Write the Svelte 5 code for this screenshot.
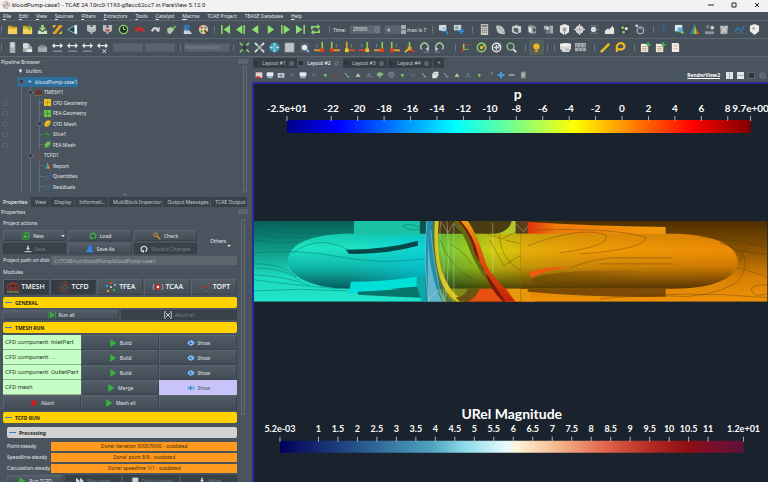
<script lang="ts">
  // Inner SVG of every icon, drawn on a 12x12 grid
  const glyphs: Record<string, string> = {
    open: '<path d="M1 2h4l1 1h5v8H1z" fill="#d9a520"/><path d="M1 5h10v6H1z" fill="#f5d35b"/>',
    openGreen: '<path d="M1 2h4l1 1h5v8H1z" fill="#d9a520"/><path d="M1 5h10v6H1z" fill="#f5d35b"/><path d="M8 1v4M6 4l2 3 2-3z" fill="#6cc24a" stroke="#6cc24a"/>',
    save: '<path d="M6 1v4" stroke="#9bd67c" stroke-width="3"/><path d="M2 4h8L6 8z" fill="#9bd67c"/><path d="M1 7h2l3 2 3-2h2v4H1z" fill="#c8e6c0"/>',
    extract: '<path d="M1 1h4L1 5zM11 11H7l4-4zM1 11V8l3 3zM11 1v3L8 1z" fill="#e8b423"/><path d="M3 10l6-8" stroke="#f0a818" stroke-width="3"/>',
    cone: '<path d="M1 6l9-5v10z" fill="#1d3f49" stroke="#7cc8d8"/><path d="M8 2l3-1v10l-3-1z" fill="#eee"/>',
    plug: '<path d="M1 1h4v3h2V1h4v5q0 3-4 3v2H5V9Q1 9 1 6z" fill="#b4babe"/><path d="M3 4h6" stroke="#ddd"/>',
    plugRed: '<path d="M1 1h4v3h2V1h4v5q0 3-4 3v2H5V9Q1 9 1 6z" fill="#b4babe"/><path d="M4 7h4" stroke="#c33" stroke-width="2"/>',
    reload: '<circle cx="6" cy="6" r="4.500" fill="#26332b" stroke="#8ccb6c" stroke-width="1.500"/><path d="M6 3v3h2" fill="none" stroke="#b7e69a"/>',
    undo: '<path d="M3 6q4-4 8 3" fill="none" stroke="#d8281e" stroke-width="2.500"/><path d="M1 3l1 6 4-2z" fill="#d8281e"/>',
    redo: '<path d="M9 6Q5 2 2 8" fill="none" stroke="#d0d3d6" stroke-width="2.500"/><path d="M11 3l-1 6-4-2z" fill="#d0d3d6"/>',
    find: '<path d="M1 5l5-2 3 3-4 5-3-1z" fill="#a9c9a4"/><path d="M6 6l4-5 1 3z" fill="#6cc24a"/>',
    layers: '<path d="M2 1h6v6H2z" fill="#2f78b8"/><path d="M2 7h6l3 4H2z" fill="#cfd5da"/><path d="M3 6l5 4" stroke="#8ec4ea"/>',
    palette: '<circle cx="6" cy="6" r="5" fill="#e9c89c"/><circle cx="4" cy="4" r="1.2" fill="#d33"/><circle cx="8" cy="4" r="1.2" fill="#38c"/><circle cx="4" cy="8" r="1.2" fill="#3a3"/><path d="M7 7l4 4" stroke="#444" stroke-width="2"/>',
    first: '<path d="M2 1v10" stroke="#8ee06c" stroke-width="1.6"/><path d="M11 1v10L4 6z" fill="#8ee06c"/>',
    prev: '<path d="M8 1v10L1 6z" fill="#8ee06c"/><path d="M10 1v10" stroke="#8ee06c" stroke-width="1.6"/>',
    back: '<path d="M9 1v10L2 6z" fill="#8ee06c"/>',
    play: '<path d="M3 1v10l7-5z" fill="#8ee06c"/>',
    next: '<path d="M2 1v10" stroke="#8ee06c" stroke-width="1.6"/><path d="M4 1v10l7-5z" fill="#8ee06c"/>',
    last: '<path d="M1 1v10l7-5z" fill="#8ee06c"/><path d="M10 1v10" stroke="#8ee06c" stroke-width="1.6"/>',
    loop: '<path d="M2 6V3h7M10 6v3H3" fill="none" stroke="#8ee06c" stroke-width="1.8"/><path d="M8 0l3 3-3 3zM4 6L1 9l3 3z" fill="#8ee06c"/>',
    zoomTime: '<path d="M1 1h8v6H1z" fill="#cdd6dd"/><circle cx="6" cy="5" r="2.500" fill="#9cc4df" stroke="#e8eef2"/><path d="M8 7l3 4" stroke="#2f8fd0" stroke-width="2"/>',
    zoomPlus: '<path d="M1 1h8v6H1z" fill="#cdd6dd"/><circle cx="4" cy="4" r="2" fill="#8aa"/><path d="M9 5v6M6 8h6" stroke="#2f8fd0" stroke-width="2"/>',
    calc: '<path d="M2 0h8v12H2z" fill="#c9c8c0"/><path d="M3 1h6v2H3z" fill="#777"/><path d="M3 5h6M3 7h6M3 9h6" stroke="#666" stroke-dasharray="1.4 .8"/>',
    leaf: '<path d="M1 2q6-2 9 4l1 5q-7 1-9-4z" fill="#bfc3c4"/><path d="M3 3l7 7" stroke="#888" stroke-width=".6"/>',
    cube: '<path d="M1 3l5-2 5 2v6l-5 2-5-2z" fill="#c9cccd"/><path d="M3 4l5 1v5l-5-2z" fill="#555c63"/><path d="M8 5l3-2" stroke="#eee"/>',
    clip: '<path d="M1 2l4-1 5 2v7l-4 1-5-2z" fill="#8f959a"/><path d="M2 3l3 1v6L2 8z" fill="#e3e3e3"/><path d="M7 5h2v3H7z" fill="#333b43"/>',
    thresh: '<path d="M1 2h5v4H1zM7 2h4v8H7z" fill="#a7adb1"/><path d="M3 5h5v6H3z" fill="#6d747b"/><circle cx="5" cy="5" r="1.4" fill="#eee"/>',
    box: '<path d="M1 2l5-2 5 2v7l-5 3-5-3z" fill="#e8e8e6"/><path d="M4 4h4v4H4z" fill="#9ea3a5"/><path d="M6 8v4" stroke="#888"/>',
    sphere: '<circle cx="6" cy="6" r="4.500" fill="#d5d7d7"/><path d="M6 0v12M0 6h12" stroke="#f0f0f0"/><path d="M6 2v8M2 6h8" stroke="#888" stroke-width=".6"/>',
    stream: '<circle cx="5" cy="6" r="3" fill="#d9d9d9"/><path d="M1 2h9M1 10h9M7 6h4" stroke="#737a80"/>',
    warp: '<path d="M1 8q3-5 5-2l3-4 2 3v6H1z" fill="#e3e4e2"/>',
    group: '<path d="M1 1h10v10H1z" fill="#3b464c"/><circle cx="4" cy="4" r="1.6" fill="#7fc95f"/><circle cx="8" cy="5" r="1.8" fill="#dfe4dd"/><circle cx="5" cy="9" r="1.6" fill="#7fc95f"/>',
    level: '<circle cx="7" cy="7" r="3.500" fill="none" stroke="#aab0b5" stroke-width="1.4"/><circle cx="3" cy="2" r="1.500" fill="#dde2e5"/><path d="M3 2l5 4" stroke="#aac"/>',
    half: '<path d="M4 1h2v9H4z" fill="#2d62a0"/>',
    sheet: '<path d="M1 1h8v7H1z" fill="#d8e8f0"/><path d="M4 4h5v5H4z" fill="#63a6d8"/><path d="M9 7v4M7 9h4" stroke="#6cc24a" stroke-width="1.4"/>',
    prism: '<path d="M6 0l3 11H6z" fill="#e7d622"/><path d="M6 0L1 11h3z" fill="#3a6fd8"/><path d="M6 0L4 11h3z" fill="#48b84a"/><path d="M7 4l4 7H8z" fill="#e26a26"/>',
    people: '<circle cx="4" cy="3" r="2" fill="#777f86"/><circle cx="9" cy="4" r="2" fill="#c9ccd0"/><path d="M1 8h10v3H1z" fill="#8f969b"/>',
    graph: '<path d="M1 2h9l-1 9H2z" fill="#a8acad"/><path d="M2 10l7-8M3 3l5 6" stroke="#e6e6e6"/>',
    wave: '<path d="M1 9q3-7 5-3t5-4" fill="none" stroke="#2f78b8" stroke-width="1.500"/><path d="M1 10h10" stroke="#54707f"/>',
    shell: '<path d="M1 2l5-2 5 2v6l-5 4-5-4z" fill="#ecebe8"/><circle cx="5" cy="5" r="1.6" fill="#b5b5b2"/>',
    bar: '<path d="M3 0h6v12H3z" fill="#a9aeb1"/><path d="M4 1h4v5H4z" fill="#d0d3d5"/>',
    edit: '<path d="M1 1h6l4 5v5H1z" fill="#a5aaad"/><circle cx="4" cy="4" r="3" fill="#d8dadb"/><path d="M5 8h6v3H5z" fill="#e9e9e9"/>',
    bake: '<path d="M1 5h10v6H1z" fill="#a2a8ab"/><path d="M3 3h6v3H3z" fill="#7d858b"/>',
    range: '<path d="M1 4h10" stroke="#eee" stroke-width="1.3"/><path d="M0 4l3-3v6zM12 4L9 1v6z" fill="#eee"/><path d="M1 10h10" stroke="#8d949a" stroke-width="1.4"/>',
    rangeX: '<path d="M1 4h10" stroke="#eee" stroke-width="1.3"/><path d="M0 4l3-3v6zM12 4L9 1v6z" fill="#eee"/><path d="M6 8l4 4M10 8l-4 4" stroke="#eee"/>',
    fitDark: '<path d="M1 1l3 3M11 1L8 4M1 11l3-3M11 11L8 8" stroke="#7fbf6a" stroke-width="1.8"/><path d="M4 4h4v4H4z" fill="#303a35"/>',
    fit: '<path d="M1 1l3 3M11 1L8 4M1 11l3-3M11 11L8 8" stroke="#dfe3e6" stroke-width="2"/><path d="M4 4h4v4H4z" fill="#aab1b6"/>',
    target: '<circle cx="6" cy="6" r="5.500" fill="#3e9bb4"/><path d="M6 1v3M6 8v3M1 6h3M8 6h3" stroke="#b9e3ee" stroke-width="1.500"/><path d="M4 4h4v4H4z" fill="#59b7cd"/>',
    fill: '<path d="M1 1h10v10H1z" fill="#bfc2c4"/><path d="M1 1h10v10H1z" fill="none" stroke="#8f9599" stroke-dasharray="1 1"/>',
    lens: '<path d="M1 1h10v10H1z" fill="#56616b"/><circle cx="6" cy="6" r="3" fill="#dfe9f0"/><path d="M8 8l3 3" stroke="#8fb4d0" stroke-width="2"/>',
    axR: '<path d="M9 0v9" stroke="#8ccf45" stroke-width="1.8"/><path d="M0 9h9" stroke="#e8952b" stroke-width="2"/><path d="M7 7h4v4H7z" fill="#e03a1c"/><path d="M3 2v4" stroke="#7b858d"/>',
    axL: '<path d="M3 0v9" stroke="#8ccf45" stroke-width="1.8"/><path d="M2 9h10" stroke="#e6a321" stroke-width="2"/><path d="M1 7h4v4H1z" fill="#e03a1c"/><path d="M8 2v4" stroke="#7b858d"/>',
    axY: '<path d="M3 0v9" stroke="#e6a321" stroke-width="1.8"/><path d="M2 9h10" stroke="#d9482b" stroke-width="2"/><path d="M1 7h4v4H1z" fill="#e8d12a"/><path d="M8 2v4" stroke="#7b858d"/>',
    axG: '<path d="M9 0v9" stroke="#8ccf45" stroke-width="1.8"/><path d="M0 9h9" stroke="#d9482b" stroke-width="2"/><path d="M7 7h4v4H7z" fill="#e8c52a"/><path d="M3 2v4" stroke="#7b858d"/>',
    iso: '<path d="M6 0v7" stroke="#8ccf45" stroke-width="1.8"/><path d="M6 7l-5 4" stroke="#e6c321" stroke-width="2"/><path d="M6 7l5 4" stroke="#e03a1c" stroke-width="2"/><path d="M4 5h4v4H4z" fill="#e8a32a"/>',
    rotL: '<path d="M9 8A4 4 0 1 0 3 8" fill="none" stroke="#a9cfa6" stroke-width="1.500"/><path d="M7 7h4l-1 3z" fill="#cde"/><path d="M5 11h6" stroke="#7d868d"/>',
    rotR: '<path d="M3 8A4 4 0 1 1 9 8" fill="none" stroke="#a9cfa6" stroke-width="1.500"/><path d="M5 7H1l1 3z" fill="#cde"/><path d="M1 11h6" stroke="#7d868d"/>',
    axes: '<path d="M3 9V2" stroke="#e6c321" stroke-width="1.4"/><path d="M3 8h6" stroke="#7dc63e"/><path d="M3 8l-2 3" stroke="#e03a1c" stroke-width="1.4"/><path d="M6 3h5" stroke="#e05030" stroke-dasharray="1.5 .5"/>',
    spinG: '<circle cx="6" cy="6" r="4.600" fill="none" stroke="#9bd65e" stroke-width="1.500"/><circle cx="6" cy="6" r="1.8" fill="#e0c030"/><path d="M10 1v4H7z" fill="#9bd65e"/>',
    spinW: '<circle cx="6" cy="6" r="4.600" fill="none" stroke="#e6e8ea" stroke-width="1.500"/><path d="M6 3v6M3 6h6" stroke="#cfd6da" stroke-width="1.6"/><path d="M10 1v4H7z" fill="#e6e8ea"/>',
    spinZ: '<circle cx="5" cy="5" r="3.800" fill="none" stroke="#8fc48a" stroke-width="1.500"/><path d="M8 8l3 3" stroke="#dfe4e6" stroke-width="2"/>',
    bulb: '<circle cx="6" cy="5" r="3.400" fill="#f2b71c"/><path d="M4.500 8h3v3h-3z" fill="#c9962a"/>',
    disk: '<path d="M0 2h12v5l-2 4H3L0 7z" fill="#d7d7d5"/><ellipse cx="6" cy="3" rx="6" ry="2" fill="#efefed"/><path d="M6 8h4" stroke="#999"/>',
    hatch: '<path d="M0 1h12v9H0z" fill="#a3a8ab"/><path d="M0 6h12M2 2v4M6 2v4M10 2v4M4 6v4M8 6v4" stroke="#6b7278"/>',
    ruler: '<path d="M0 10l9-9 2 2-9 9z" fill="#edc224"/><path d="M3 8l1 1M5 6l1 1M7 4l1 1" stroke="#8a6a00" stroke-width=".6"/>',
    protractor: '<path d="M2 11V4Q5 0 9 2q3 4-1 6H3" fill="none" stroke="#edb824" stroke-width="2.400"/>',
    sheetAdd: '<path d="M1 2h8v9H1z" fill="#f0eee8"/><path d="M2 5h6M2 7h6M2 9h6" stroke="#c98a5a" stroke-width=".8"/><path d="M9 0v5M7 3h5" stroke="#3fb34f" stroke-width="1.500"/>',
    sheetPlain: '<path d="M2 1h7l1 2v8H2z" fill="#efece6"/><path d="M4 4h4M4 7h4" stroke="#c9a58a" stroke-width=".8"/>',
    cam: '<path d="M1 3h10v7H1z" fill="#c7cfd6"/><circle cx="6" cy="6.500" r="2.400" fill="#6d90aa"/>',
    camRed: '<path d="M1 2h10v8H1z" fill="#e3d5d5"/><path d="M1 8h7v3H1z" fill="#c33"/>',
    camUp: '<path d="M1 2h10v6H1z" fill="#e8edf1"/><path d="M3 7h6l1 4H2z" fill="#9fb2c0"/>',
    faint: '<path d="M3 4h6v4H3z" fill="#5b656e"/>',
    dotG: '<path d="M4 6h5M6.500 4v5" stroke="#7fd05a" stroke-width="1.8"/>',
    minus: '<path d="M2 6h8" stroke="#a8423a" stroke-width="1.6"/>',
    pick: '<path d="M3 3l5 6" stroke="#c9b09a" stroke-width="1.3"/><path d="M6 9h4" stroke="#9ab"/>',
    tri: '<path d="M6 3l4 6H2z" fill="#a7b6a4"/><path d="M6 5v3" stroke="#e8e04a"/>',
    triOut: '<path d="M6 3l4 7M6 3L3 10M4 8h4" fill="none" stroke="#7f8a92"/>',
    blob: '<path d="M1 7q0-5 5-5t5 4l-4 1v4H5V8z" fill="#86b878"/>',
    blobOut: '<path d="M2 7q-1-5 4-5t5 4l-3 4H6z" fill="#616c75" stroke="#8b959c"/>',
    cubeW: '<path d="M2 4l3-3h6v6l-3 4H2z" fill="#e6e6e3"/><path d="M2 4h6v7" fill="none" stroke="#a0a4a6"/>',
    slash: '<path d="M2 10l7-7" stroke="#7c6a55"/><circle cx="9" cy="3" r="1.500" fill="#5d9a66"/>',
    plusB: '<path d="M6 1v10M1 6h10" stroke="#3f9fd6" stroke-width="3"/>',
    dash: '<path d="M1 6h9" stroke="#c7ccd0" stroke-width="1.6"/>',
    clipb: '<path d="M3 1h7v10H3z" fill="#8f9a94"/><path d="M4 4h5M4 7h5" stroke="#c4cfc4"/>',
    server: '<path d="M4 2h4v5H4z" fill="#dde2e6"/><path d="M6 7v3" stroke="#aab"/>',
    small: '<path d="M4 4h4v4H4z" fill="#79b7d6"/><path d="M7 6h3" stroke="#ddd"/>',
    mesh: '<path d="M0 11V6q1-4 6-4t6 4v5z" fill="#3a3230" stroke="#c8352c"/><path d="M1 7h10M1 9h10M4 3v8M8 3v8" stroke="#b23b31" stroke-width=".7"/><path d="M0 11h12" stroke="#3fae5a"/>',
    cfd: '<circle cx="6" cy="6" r="5" fill="none" stroke="#b5382e" stroke-dasharray="3 1.5"/><circle cx="6" cy="6" r="2.500" fill="none" stroke="#3f8f57" stroke-dasharray="2 1"/><path d="M3 9l6-7" stroke="#a33d34"/>',
    fea: '<circle cx="6" cy="2" r="1.300" fill="#d9482b"/><circle cx="2" cy="5" r="1.200" fill="#38a4d8"/><circle cx="3" cy="10" r="1.300" fill="#e69a21"/><circle cx="9" cy="9" r="1.300" fill="#3fae5a"/><circle cx="10" cy="4" r="1.200" fill="#8ac"/><circle cx="6" cy="6" r="1" fill="#ddd"/>',
    caa: '<circle cx="6" cy="6" r="2" fill="#fff" stroke="#d8281e" stroke-width="1.500"/><path d="M2 3q-2 3 0 6M10 3q2 3 0 6" fill="none" stroke="#9aa3aa"/>',
    opt: '<circle cx="7" cy="6" r="4" fill="none" stroke="#45785a" stroke-dasharray="2 1"/><path d="M1 8l4-3 3 2 3-5" fill="none" stroke="#b5382e"/>',
    geoY: '<path d="M0 0h12v12H0z" fill="#f2c21e"/><path d="M6 1v10M1 6h10" stroke="#a97a10"/>',
    geoG: '<path d="M0 0h12v12H0z" fill="#6cc24a"/><path d="M6 1v10M1 6h10" stroke="#2f7a24"/>',
    cubeY: '<path d="M1 5l4-4h6v5l-4 5H1z" fill="#f2c21e"/><path d="M3 7h4l3-4" stroke="#a97a10" fill="none"/>',
    cubeG: '<path d="M1 6l4-5h6v5l-4 5H1z" fill="#62b04a"/><path d="M3 8l6-5" stroke="#b9e6a6" fill="none"/>',
    slice: '<path d="M1 1h3v10H1z" fill="#35752f"/><path d="M5 2l5 1v8H5z" fill="#3c6b42"/><path d="M4 3l4 4" stroke="#8fd67a"/>',
    newDoc: '<path d="M4 1h7v8H4z" fill="none" stroke="#35b43a" stroke-width="1.300"/><path d="M1 3h8v8H1z" fill="#2c6f34" stroke="#35b43a"/><path d="M5 5v4M3 7h4" stroke="#8ff090"/>',
    load: '<path d="M4 10A4.300 4.300 0 1 1 8 10" fill="none" stroke="#35b43a" stroke-width="2"/><path d="M1 8h5v4z" fill="#35b43a"/>',
    discard: '<path d="M4 10A4.300 4.300 0 1 1 8 10" fill="none" stroke="#dde1e4" stroke-width="1.8"/><path d="M1 8h5v4z" fill="#dde1e4"/>',
    check: '<circle cx="4" cy="4" r="2.800" fill="none" stroke="#d9902a" stroke-width="1.500"/><path d="M6 6l5 5" stroke="#d9902a" stroke-width="2"/>',
    down: '<path d="M6 1v5" stroke="#dde1e4" stroke-width="2"/><path d="M3 5h6L6 8z" fill="#dde1e4"/><path d="M1 10h10" stroke="#dde1e4" stroke-width="1.500"/>',
    saveAs: '<path d="M3 1h6v5H3z" fill="#2f7fe0"/><path d="M0 11l3-5h5l4 5z" fill="#3a85e6"/>',
    runAll: '<path d="M1 1v10M11 1v10" stroke="#35b43a"/><path d="M3 1v10l7-5z" fill="#35b43a"/>',
    abortAll: '<path d="M3 1H1v10h2M9 1h2v10H9" fill="none" stroke="#cfd4d8" stroke-width="1.3"/><path d="M3 3l6 6M9 3L3 9" stroke="#cfd4d8" stroke-width="1.500"/>',
    go: '<path d="M2 0v12l9-6z" fill="#35b43a"/>',
    eye: '<path d="M0 6q6-8 12 0-6 8-12 0z" fill="#4f9ff0"/><circle cx="6" cy="5.800" r="3" fill="#1d5fb4" stroke="#eaf3ff"/><circle cx="7" cy="5" r="1" fill="#fff"/>',
    stop: '<path d="M3 2h6l1 1v6l-1 1H3L2 9V3z" fill="#c5232b"/>',
    ff: '<path d="M0 1v10l6-5zM6 1v10l6-5z" fill="#cfd4d8"/>',
    square: '<path d="M2 1h9v10H2z" fill="#cfd4d8"/>',
    split: '<path d="M0 0h12v12H0z" fill="#dfe5ec"/><path d="M6 1v10" stroke="#6f86a8"/>',
    splitH: '<path d="M0 0h12v12H0z" fill="#dfe5ec"/><path d="M1 6h10" stroke="#6f86a8"/>',
    max: '<path d="M1 1h10v10H1z" fill="#2c343c" stroke="#79838c"/>',
    close: '<path d="M1 1h10v10H1z" fill="#66707a"/><path d="M3 3l6 6M9 3l-6 6" stroke="#384049"/>'
  };

  const menus = ['File', 'Edit', 'View', 'Sources', 'Filters', 'Extractors', 'Tools', 'Catalyst', 'Macros', 'TCAE Project', 'TBASE Database', 'Help'];

  const fileTools = ['open', 'openGreen', 'save', 'extract', 'cone'];
  const serverTools = ['plug', 'plugRed', 'reload', 'undo', 'redo', 'find', 'layers', 'palette'];
  const vcrTools = ['first', 'prev', 'back', 'play', 'next', 'last', 'loop'];
  const filterTools = ['calc', 'leaf', 'cube', 'clip', 'thresh', 'box'];
  const filterTools2 = ['sphere', 'stream', 'warp', 'group', 'level'];
  const dataTools = ['half', 'sheet', 'prism', 'people', 'graph', 'wave', 'shell'];

  const colorTools = ['bar', 'edit', 'bake', 'range', 'range', 'range', 'rangeX'];
  const cameraTools = ['fitDark', 'fit', 'target', 'fill', 'lens', 'axR', 'axL', 'axY', 'axG', 'axR', 'axL', 'iso', 'rotL', 'rotR'];
  const centerTools = ['axes', 'spinG', 'spinW', 'spinZ'];

  const viewTools = ['camRed', 'camUp', 'cam', 'faint', 'camUp', 'faint', 'dotG', 'minus', 'pick', 'tri', 'triOut', 'blob', 'blobOut', 'dotG', 'faint', 'pick', 'cubeW', 'pick', 'tri', 'triOut', 'dotG', 'slash', 'plusB', 'dash', 'clipb'];

  const tree = [
    { level: 0, icon: 'server', label: 'builtin:' },
    { level: 1, icon: 'small', label: 'bloodPump-case1', open: true, selected: true },
    { level: 2, icon: 'mesh', label: 'TMESH1', open: true },
    { level: 3, icon: 'geoY', label: 'CFD Geometry', eye: true },
    { level: 3, icon: 'geoG', label: 'FEA Geometry', eye: true },
    { level: 3, icon: 'cubeY', label: 'CFD Mesh', open: true, eye: true },
    { level: 3, icon: 'slice', label: 'Slice1', eye: true },
    { level: 3, icon: 'cubeG', label: 'FEA Mesh', eye: true },
    { level: 2, icon: 'cfd', label: 'TCFD1', open: true },
    { level: 3, icon: 'prism', label: 'Report' },
    { level: 3, icon: 'wave', label: 'Quantities' },
    { level: 3, icon: 'wave', label: 'Residuals' }
  ];

  const panelTabs = ['Properties', 'View', 'Display', 'Informati...', 'MultiBlock Inspector', 'Output Messages', 'TCAE Output'];

  const actions = [
    { icon: 'newDoc', label: 'New', arrow: true },
    { icon: 'load', label: 'Load' },
    { icon: 'check', label: 'Check' },
    { icon: 'down', label: 'Save', off: true },
    { icon: 'saveAs', label: 'Save As' },
    { icon: 'discard', label: 'Discard Changes', off: true }
  ];

  const modules = [
    { icon: 'mesh', label: 'TMESH', on: true },
    { icon: 'cfd', label: 'TCFD', on: true },
    { icon: 'fea', label: 'TFEA' },
    { icon: 'caa', label: 'TCAA' },
    { icon: 'opt', label: 'TOPT' }
  ];

  const parts = [
    { name: 'CFD component: InletPart', action: 'Build' },
    { name: 'CFD component: ...', action: 'Build' },
    { name: 'CFD component: OutletPart', action: 'Build' },
    { name: 'CFD mesh', action: 'Merge', shown: true }
  ];

  const progress = [
    { name: 'Point-steady', text: 'Done! iteration 5000/5000 - outdated' },
    { name: 'Speedline-steady', text: 'Done! point 8/8 - outdated' },
    { name: 'Calculation-steady', text: 'Done! speedline 1/1 - outdated' }
  ];

  const layouts = ['Layout #1', 'Layout #2', 'Layout #3', 'Layout #4'];

  // Legend ticks
  const pTicks = Array.from({ length: 16 }, (_, i) => -22 + i * 2).map((v) => ({ x: 516.5 + 13.23 * (v + 8), label: String(v) }));
  const uTicks = Array.from({ length: 21 }, (_, i) => 1 + i * 0.5).map((v) => ({ x: 318.5 + 39 * (v - 1), label: String(v) }));

  let activeTab = $state('Properties');
  let activeLayout = $state('Layout #2');
  let time = $state('25000');
  let step = $state('4');
  let path = $state('C:/TCAE/run/bloodPump/bloodPump-case1');
</script>

{#snippet icon(name: string)}
  <svg class="icon" viewBox="0 0 12 12" aria-hidden="true">{@html glyphs[name]}</svg>
{/snippet}

{#snippet tools(names: string[], wide = false)}
  <div class="group" class:wide>
    {#each names as name}
      <button class="tool" aria-label={name}>{@render icon(name)}</button>
    {/each}
  </div>
{/snippet}

{#snippet section(title: string)}
  <button class="section"><span class="fold"></span>{title}</button>
{/snippet}

<div class="app">
  <header class="titlebar">
    {@render icon('cfd')}
    <span>bloodPump-case1 - TCAE 24.10rc0-1193-g8ecc62cc7 in ParaView 5.12.0</span>
    <div class="window-buttons">
      <button aria-label="Minimize"><svg viewBox="0 0 8 8"><path d="M1 4h6" /></svg></button>
      <button aria-label="Maximize"><svg viewBox="0 0 8 8"><path d="M2 2h4v4H2z" /></svg></button>
      <button aria-label="Close"><svg viewBox="0 0 8 8"><path d="M2 2l4 4M6 2L2 6" /></svg></button>
    </div>
  </header>

  <nav class="menubar">
    {#each menus as menu}
      <button>{#if menu === 'TCAE Project' || menu === 'TBASE Database'}{menu}{:else}<u>{menu[0]}</u>{menu.slice(1)}{/if}</button>
    {/each}
  </nav>

  <div class="toolbar">
    <i class="sep"></i>
    {@render tools(fileTools)}
    {@render tools(serverTools, true)}
    <i class="sep"></i>
    {@render tools(vcrTools)}
    <i class="sep"></i>
    <label for="time">Time:</label>
    <select id="time" class="time" bind:value={time}><option>25000</option></select>
    <input class="step" type="text" inputmode="numeric" aria-label="Time step" bind:value={step} />
    <span class="spin"></span>
    <span class="max">max is 7</span>
    <i class="sep"></i>
    {@render tools(['zoomTime', 'zoomPlus'])}
    <i class="sep"></i>
    {@render tools(filterTools, true)}
    {@render tools(filterTools2)}
    <i class="sep"></i>
    {@render tools(dataTools)}
  </div>

  <div class="toolbar">
    <i class="sep"></i>
    {@render tools(colorTools)}
    <select class="array" aria-label="Color array"><option></option></select>
    <select class="array" aria-label="Component"><option></option></select>
    <i class="sep"></i>
    <select class="repr" aria-label="Representation"><option>Representation</option></select>
    <i class="sep"></i>
    {@render tools(cameraTools)}
    <i class="sep wide-sep"></i>
    {@render tools(centerTools)}
    <i class="sep"></i>
    <button class="tool pressed" aria-label="Light">{@render icon('bulb')}</button>
    <i class="sep"></i>
    <i class="sep"></i>
    {@render tools(['disk', 'hatch'])}
    <i class="sep"></i>
    {@render tools(['ruler', 'protractor'])}
    <i class="sep"></i>
    {@render tools(['sheetAdd', 'sheetAdd', 'sheetPlain'])}
  </div>

  <main>
    <aside>
      <div class="dock-title">Pipeline Browser {@render icon('close')}{@render icon('close')}</div>
      <div class="tree">
        <div class="rows">
          {#each tree as node}
            <div class="node">
              <span class="vis">{#if node.eye}<i></i>{/if}</span>
              {#each Array(Math.max(node.level - 1, 0)) as _}
                <span class="guide"></span>
              {/each}
              <span class="item" class:root={node.level === 0} class:selected={node.selected}>
                <span class="branch" class:open={node.open}></span>
                {@render icon(node.icon)}
                {node.label}
              </span>
            </div>
          {/each}
        </div>
        <div class="scroll"><i></i></div>
      </div>
      <div class="splitter"></div>

      <div class="tabs" role="tablist">
        {#each panelTabs as tab}
          <button role="tab" aria-selected={activeTab === tab} class:active={activeTab === tab} onclick={() => (activeTab = tab)}>{tab}</button>
        {/each}
      </div>
      <div class="dock-title">Properties {@render icon('close')}{@render icon('close')}</div>

      <div class="props">
        <div class="form">
          <p class="caption">Project actions</p>
          <div class="actions">
            {#each actions as a}
              <button class="btn" disabled={a.off}>{@render icon(a.icon)}<span>{a.label}</span>{#if a.arrow}<b class="arrow"></b>{/if}</button>
            {/each}
            <button class="others">Others<b class="arrow"></b></button>
          </div>
          <div class="path">
            <label for="path">Project path on disk</label>
            <input id="path" type="text" bind:value={path} />
          </div>
          <p class="caption">Modules</p>
          <div class="modules">
            {#each modules as m}
              <button class="btn" class:on={m.on}>{@render icon(m.icon)}{m.label}</button>
            {/each}
          </div>

          {@render section('GENERAL')}
          <div class="pair">
            <button class="btn">{@render icon('runAll')}<span>Run all</span></button>
            <button class="btn" disabled>{@render icon('abortAll')}<span>Abort all</span></button>
          </div>

          {@render section('TMESH RUN')}
          <div class="parts">
            {#each parts as p}
              <span class="part">{p.name}</span>
              <button class="btn">{@render icon('go')}{p.action}</button>
              <button class="btn" class:shown={p.shown}>{@render icon('eye')}Show</button>
            {/each}
            <button class="btn">{@render icon('stop')}Abort</button>
            <button class="btn">{@render icon('go')}Mesh all</button>
            <span class="btn"></span>
          </div>

          {@render section('TCFD RUN')}
          <div class="sub">
            <button class="section grey"><span class="fold"></span>Processing</button>
            {#each progress as row}
              <div class="status"><span>{row.name}</span><output>{row.text}</output></div>
            {/each}
            <div class="run">
              <button class="btn">{@render icon('go')}<span>Run TCFD</span></button>
              <button class="btn" disabled>{@render icon('ff')}<span>Skip point</span></button>
              <button class="btn" disabled>{@render icon('square')}<span>Quit (+ write)</span></button>
              <button class="btn" disabled>{@render icon('down')}<span>Write</span></button>
            </div>
          </div>
        </div>
        <div class="scroll"><i></i></div>
      </div>
    </aside>

    <section class="workspace">
      <div class="layouts" role="tablist">
        {#each layouts as l}
          <button role="tab" aria-selected={activeLayout === l} class:active={activeLayout === l} onclick={() => (activeLayout = l)}><i></i>{l}{@render icon('close')}</button>
        {/each}
        <button class="add">+</button>
      </div>
      <div class="viewbar">
        {#each viewTools as name}
          <button class="tool" aria-label={name}>{@render icon(name)}</button>
        {/each}
        <a href="#view">RenderView2</a>
        {#each ['split', 'splitH', 'max', 'close'] as name}
          <button class="tool frame" aria-label={name}>{@render icon(name)}</button>
        {/each}
      </div>

      <div class="view" id="view">
        <svg viewBox="254 84 514 398" preserveAspectRatio="xMidYMin meet">
          <defs>
            <linearGradient id="jet">
              <stop offset="0" stop-color="#00008c" />
              <stop offset=".11" stop-color="#0000ff" />
              <stop offset=".365" stop-color="#00ffff" />
              <stop offset=".5" stop-color="#80ff80" />
              <stop offset=".62" stop-color="#ffff00" />
              <stop offset=".875" stop-color="#ff0000" />
              <stop offset="1" stop-color="#800000" />
            </linearGradient>
            <linearGradient id="velocity">
              <stop offset="0" stop-color="#00005a" />
              <stop offset=".08" stop-color="#14286e" />
              <stop offset=".16" stop-color="#24508a" />
              <stop offset=".33" stop-color="#50a5c0" />
              <stop offset=".4" stop-color="#8fdcea" />
              <stop offset=".49" stop-color="#e6fbff" />
              <stop offset=".51" stop-color="#fff3d8" />
              <stop offset=".6" stop-color="#f3b68c" />
              <stop offset=".7" stop-color="#e2664c" />
              <stop offset=".8" stop-color="#b32a22" />
              <stop offset=".88" stop-color="#8f0d12" />
              <stop offset=".93" stop-color="#7b0f2c" />
              <stop offset="1" stop-color="#5c1138" />
            </linearGradient>
            <linearGradient id="inlet" x2="0" y2="1">
              <stop offset="0" stop-color="#075f57" />
              <stop offset=".4" stop-color="#10a08c" />
              <stop offset=".7" stop-color="#1ddcc0" />
              <stop offset="1" stop-color="#20e4c8" />
            </linearGradient>
            <linearGradient id="nose" x2="0" y2="1">
              <stop offset="0" stop-color="#14c8ae" />
              <stop offset=".25" stop-color="#1fe4c4" />
              <stop offset=".6" stop-color="#0fb8ac" />
              <stop offset="1" stop-color="#045a5c" />
            </linearGradient>
            <linearGradient id="cyan">
              <stop offset="0" stop-color="#00c8e0" stop-opacity="0" />
              <stop offset="1" stop-color="#00c8e0" stop-opacity=".6" />
            </linearGradient>
            <linearGradient id="hub">
              <stop offset="0" stop-color="#68c43c" />
              <stop offset=".4" stop-color="#a5d020" />
              <stop offset=".6" stop-color="#d6cc10" />
              <stop offset="1" stop-color="#e0b408" />
            </linearGradient>
            <linearGradient id="shade" x2="0" y2="1">
              <stop offset="0" stop-color="#000" stop-opacity=".1" />
              <stop offset=".3" stop-color="#000" stop-opacity="0" />
              <stop offset=".6" stop-color="#000" stop-opacity=".15" />
              <stop offset="1" stop-color="#000" stop-opacity=".65" />
            </linearGradient>
            <linearGradient id="outlet" x2="0" y2="1">
              <stop offset="0" stop-color="#4c2e00" />
              <stop offset=".35" stop-color="#8a5300" />
              <stop offset=".7" stop-color="#d88004" />
              <stop offset="1" stop-color="#f09206" />
            </linearGradient>
            <linearGradient id="tail">
              <stop offset="0" stop-color="#e2b00a" />
              <stop offset=".3" stop-color="#ef9c06" />
              <stop offset="1" stop-color="#f08c04" />
            </linearGradient>
            <linearGradient id="blade" x2="0" y2="1">
              <stop offset="0" stop-color="#e8a010" />
              <stop offset=".35" stop-color="#ea5a10" />
              <stop offset="1" stop-color="#c42408" />
            </linearGradient>
            <linearGradient id="fin">
              <stop offset="0" stop-color="#e2320c" />
              <stop offset=".2" stop-color="#f07a0a" />
              <stop offset="1" stop-color="#f09a0a" />
            </linearGradient>
            <linearGradient id="wake">
              <stop offset="0" stop-color="#6a4402" stop-opacity=".6" />
              <stop offset="1" stop-color="#6a4402" stop-opacity="0" />
            </linearGradient>
            <clipPath id="pipe"><path d="M254 221h514v81H254z" /></clipPath>
          </defs>

          <g class="legend">
            <text class="title" x="518" y="99">p</text>
            <path d="M287 120h464v13H287z" fill="url(#jet)" />
            <text x="287" y="112">-2.5e+01</text>
            {#each pTicks as t}
              <text x={t.x} y="112">{t.label}</text>
              <path class="tick" d="M{t.x} 116v5" />
            {/each}
            <text x="751" y="112">9.7e+00</text>
            <path class="tick" d="M287 116v5M751 116v5" />
          </g>

          <g clip-path="url(#pipe)">
            <!-- inlet and nose -->
            <path d="M254 221h174v81H254z" fill="url(#inlet)" />
            <path d="M354 221h69v14h-69z" fill="#19c2a4" />
            <path d="M420 221h8v14h-8z" fill="#0a5550" />
            <path d="M350 234C310 234 288 245 288 261C288 278 315 289 350 289H426V234z" fill="url(#nose)" />
            <path d="M350 236H426V285H350z" fill="url(#cyan)" />
            <path d="M346 250Q386 250 418 241V246Q386 255 349 254z" fill="#04484a" />
            <path d="M351 282Q385 282 417 277V287Q385 289 349 294z" fill="#00e0d8" />
            <path d="M358 292Q385 291 422 287V298Q390 297 358 295z" fill="#08756c" />
            <path d="M417 277h9v25h-4l-5-15z" fill="#0aa8a6" />
            <path class="line teal" d="M254 228Q295 236 330 233M254 234Q290 241 312 237M254 240Q282 245 300 241M292 253Q320 234 348 250M254 253Q300 249 340 257T425 259M254 264Q282 263 296 277M254 268Q286 268 300 281M254 275Q290 277 310 286M254 280Q300 286 340 289M254 291Q300 288 348 291M402 226q10-4 19 3M404 227q8 5 19 2" />

            <!-- rotor -->
            <path d="M426 221h106v81H426z" fill="#4c3c14" />
            <path d="M496 234q14-3 16-13h4v14z" fill="#b0c828" />
            <path d="M516 221h14v14h-14z" fill="#58401a" />
            <path d="M436 234h96v55h-96z" fill="url(#hub)" />
            <path d="M436 234h96v55h-96z" fill="url(#shade)" />
            <path d="M478 289h54v13h-66z" fill="#e8500f" />
            <path d="M507 289h28v13h-20z" fill="#e8980c" />
            <path d="M440 289h38l-14 13h-24z" fill="#7f8a18" />
            <path d="M426 221h8q-3 45 10 81h-18z" fill="#1f8fae" />
            <path d="M428 234q1 40 14 68h-14z" fill="#63b6cc" />
            <path d="M432 221h4q-2 40 5 60t12 21h-6Q430 270 432 221z" fill="#3c7a60" />
            <path d="M435 221h4q-4 45 10 65 5 9 16 16h-8q-12-8-17-24-7-25-5-57z" fill="#dcc418" />
            <path d="M460 302q14 2 20-13h-12q-3 8-12 9z" fill="#6b5410" />
            <path d="M454 221h6q16 17 23 40l4 20Q474 262 469 248T454 221z" fill="#5d6e12" />
            <path d="M458 221h10Q478 236 483 254T494 276L516 302H503Q490 288 487 278T475 254Q471 235 458 221z" fill="url(#blade)" />
            <path d="M458 221h3Q474 236 478 254T489 277L506 302H503Q490 288 487 278T475 254Q471 235 458 221z" fill="#7c1c06" />
            <path class="line mist" d="M427 221q-4 42 2 81M431 230q3 38 12 72M441 221q-3 20 3 40v41M447 221q4 40-2 81M454 224v78M493 223v50M442 223l6 10 6-10 6 8M428 300l10-10 8 12M516 224l8 8 6-8" />
            <path class="line rust" d="M478 231l24 8 18-9M490 240l14 26 16-10 6 9M500 228q-2 30 20 42M452 245q14 8 20 20M505 240l20 5M440 240q12 30 34 40M521 222v80" />

            <!-- outlet and tail -->
            <path d="M530 221h238v81H530z" fill="url(#outlet)" />
            <path d="M528 222Q590 226 666 227V235H528z" fill="url(#fin)" />
            <path d="M528 289H666V297Q590 298 528 292z" fill="#7c4a04" />
            <path d="M521 234H672C715 234 738 246 738 262C738 279 712 289 672 289H521z" fill="url(#tail)" />
            <path d="M521 234H672C715 234 738 246 738 262C738 279 712 289 672 289H521z" fill="url(#shade)" />
            <path d="M532 279Q548 270 650 270V288Q560 289 532 282z" fill="url(#wake)" />
            <path d="M529 273Q544 266 572 267Q546 270 532 278z" fill="#f05a10" />
            <path class="line rust" d="M528 246Q580 226 606 235 612 246 560 253M535 230Q620 228 647 238 642 250 580 254M570 268Q590 260 610 258H672M600 264H674M700 237Q740 240 768 248M720 243Q760 252 738 282Q710 300 666 296M738 250Q760 255 768 254M737 268Q750 270 768 278M768 285Q750 284 752 291T768 294M600 299Q690 290 768 298M740 262Q744 242 768 237" />
          </g>

          <g class="legend small">
            <text class="title" x="512" y="419">URel Magnitude</text>
            <path d="M280 441h464v12H280z" fill="url(#velocity)" />
            <text x="280" y="432">5.2e-03</text>
            {#each uTicks as t}
              <text x={t.x} y="432">{t.label}</text>
              <path class="tick" d="M{t.x} 437v5" />
            {/each}
            <text x="744" y="432">1.2e+01</text>
            <path class="tick" d="M280 437v5M744 437v5" />
          </g>
        </svg>
      </div>
    </section>
  </main>
</div>

<style>
  :global(body) {
    margin: 0;
    background: #47515b;
  }

  .app {
    height: 100vh;
    display: flex;
    flex-direction: column;
    overflow: hidden;
    background: #4a545e;
    color: #e4e7ea;
    font: 5px/8px "Noto Sans", "Open Sans", sans-serif;
  }

  button, input, select {
    margin: 0;
    padding: 0;
    border: 0;
    background: none;
    color: inherit;
    font: inherit;
    box-sizing: border-box;
    min-width: 0;
  }

  p {
    margin: 0;
  }

  .icon {
    width: 8px;
    height: 8px;
    flex: none;
    display: block;
  }

  /* Title bar and menus */
  .titlebar {
    height: 12px;
    flex: none;
    display: flex;
    align-items: center;
    gap: 2px;
    padding-left: 2px;
    padding-bottom: 2px;
    box-sizing: border-box;
    background: #f3f1f3;
    color: #222;
    font: 6px/8px Roboto, sans-serif;
  }

  .window-buttons {
    margin-left: auto;
    display: flex;
  }

  .window-buttons button {
    width: 23px;
    height: 10px;
    display: grid;
    place-items: center;
  }

  .window-buttons svg {
    width: 8px;
    height: 8px;
    fill: none;
    stroke: #222;
    stroke-width: 1;
  }

  .menubar {
    height: 8px;
    flex: none;
    display: flex;
    gap: 8px;
    padding-left: 3px;
    background: #47515b;
  }

  /* Toolbars */
  .toolbar {
    height: 18px;
    flex: none;
    display: flex;
    align-items: center;
    box-sizing: border-box;
    background: #46505a;
    border-top: 1px solid #5a6670;
    overflow: hidden;
  }

  .group {
    display: flex;
    flex: none;
    margin-right: 3px;
  }

  .wide {
    margin-right: 0;
  }

  .tool {
    width: 15px;
    height: 15px;
    flex: none;
    display: grid;
    place-items: center;
  }

  .tool .icon {
    width: 11px;
    height: 11px;
  }

  .wide .tool {
    width: 16px;
  }

  .pressed {
    background: #56605a;
  }

  .sep {
    width: 1px;
    height: 7px;
    flex: none;
    margin: 0 3px;
    background: #6c7680;
  }

  .sep:first-child {
    margin-left: 1px;
  }

  .wide-sep {
    margin-left: 5px;
  }

  .toolbar label {
    width: 15px;
    flex: none;
  }

  .toolbar select,
  .step {
    height: 9px;
    flex: none;
    background: #59636d;
    border: 1px solid #525c66;
    appearance: none;
    line-height: 7px;
  }

  .toolbar .time {
    width: 31px;
    margin: 0 3px 0 2px;
    padding-left: 2px;
    background: linear-gradient(90deg, #5c666f 23px, #6c7680 23px);
  }

  .step {
    width: 17px;
    padding-left: 2px;
  }

  .spin {
    width: 5px;
    height: 9px;
    flex: none;
    background: linear-gradient(#a3abb2 4px, #59636d 4px, #59636d 5px, #a3abb2 5px);
  }

  .max {
    width: 22px;
    flex: none;
    padding-left: 1px;
    white-space: nowrap;
  }

  .toolbar .array {
    width: 30px;
    margin-right: 2px;
  }

  .toolbar .repr {
    width: 46px;
    color: #7a848d;
  }

  /* Left docks */
  main {
    flex: 1;
    min-height: 0;
    display: flex;
    border-top: 1px solid #5a6670;
  }

  aside {
    width: 33%;
    flex: none;
    display: flex;
    flex-direction: column;
    box-sizing: border-box;
    padding-right: 3px;
    overflow: hidden;
  }

  .dock-title {
    height: 9px;
    flex: none;
    display: flex;
    align-items: center;
    padding: 0 2px 0 1px;
  }

  .dock-title .icon {
    width: 5px;
    height: 5px;
  }

  .dock-title .icon:first-of-type {
    margin-left: auto;
  }

  .tree {
    height: 126px;
    flex: none;
    display: flex;
  }

  .rows {
    flex: 1;
    display: flex;
    flex-direction: column;
  }

  .node {
    flex: 1;
    min-height: 0;
    display: flex;
  }

  .vis {
    width: 21px;
    box-sizing: border-box;
    padding: 3px 2px 0;
  }

  .vis i {
    display: block;
    width: 4px;
    height: 3px;
    border: 1px solid #5c6670;
    border-radius: 2px;
  }

  .guide {
    width: 9px;
    box-sizing: border-box;
    border-left: 1px solid #626c75;
  }

  .item {
    display: flex;
    align-items: center;
    gap: 2px;
    padding-right: 1px;
  }

  .item .icon {
    width: 7px;
    height: 7px;
  }

  .root {
    margin-left: -9px;
  }

  .root .branch {
    visibility: hidden;
  }

  .selected {
    background: #2c6f9e;
    margin-left: -4px;
    padding-left: 4px;
  }

  .branch {
    align-self: stretch;
    width: 5px;
    margin-right: -2px;
    box-sizing: border-box;
    border-left: 1px solid #626c75;
    background: linear-gradient(#626c75, #626c75) 0 50% / 4px 1px no-repeat;
    display: grid;
    align-items: center;
  }

  .open::before {
    content: "";
    width: 3px;
    height: 3px;
    margin-left: -3px;
    background: #343c44;
    border: 1px solid #5b656e;
  }

  .scroll {
    width: 4px;
    flex: none;
    margin-right: 3px;
  }

  .scroll i {
    display: block;
    height: 100%;
    border: 1px solid #626c75;
    box-sizing: border-box;
  }

  .splitter {
    height: 5px;
    flex: none;
    background: radial-gradient(#79838c 1px, transparent 2px) center / 8px 3px no-repeat;
  }

  .tabs {
    height: 10px;
    flex: none;
    display: flex;
    background: #39424b;
    margin-right: 2px;
  }

  .tabs button {
    padding: 0 4px;
    white-space: nowrap;
    border-right: 1px solid #4a545e;
    color: #c6ccd1;
    background: #39424b;
  }

  .tabs button:first-child {
    padding-left: 3px;
  }

  .tabs .active {
    background: #4a545e;
    color: #fff;
  }

  /* Properties */
  .props {
    flex: 1;
    min-height: 0;
    display: flex;
    gap: 4px;
  }

  .props .scroll {
    margin-right: 5px;
    padding-top: 3px;
  }

  .props .scroll i {
    height: 196px;
  }

  .form {
    flex: 1;
    min-width: 0;
    padding: 2px 0 0 3px;
    display: flex;
    flex-direction: column;
    gap: 2px;
    overflow: hidden;
  }

  .caption {
    height: 10px;
    line-height: 10px;
    flex: none;
  }

  .btn {
    display: flex;
    align-items: center;
    justify-content: center;
    gap: 3px;
    background: linear-gradient(#525c66, #434d57);
    border: 1px solid #3b444d;
    border-top-color: #5b656f;
    border-left-color: #59636d;
    white-space: nowrap;
    overflow: hidden;
  }

  .btn:disabled {
    background: #39424b;
    border-color: #353e46;
  }

  .btn:disabled span {
    color: #74808a;
  }

  .arrow {
    width: 0;
    height: 0;
    border: 2px solid transparent;
    border-top-color: #dde1e4;
    border-bottom: 0;
  }

  .actions {
    display: grid;
    grid-template-columns: 63px 64px 63px 1fr;
    grid-auto-rows: 11px;
    gap: 2px;
    flex: none;
  }

  .actions .btn .arrow {
    margin-left: 14px;
    margin-right: -18px;
  }

  .others {
    grid-column: 4;
    grid-row: 1 / 3;
    display: grid;
    place-content: center;
  }

  .others .arrow {
    margin-left: 22px;
  }

  .path {
    display: flex;
    gap: 3px;
    height: 9px;
    flex: none;
  }

  .path label {
    width: 45px;
    white-space: nowrap;
  }

  .path input {
    flex: 1;
    padding-left: 3px;
    background: #5c666f;
    color: #aeb6bc;
  }

  .modules {
    display: grid;
    grid-template-columns: repeat(5, 1fr);
    gap: 1px;
    height: 16px;
    flex: none;
  }

  .modules .btn {
    gap: 2px;
    font-size: 7px;
    font-weight: 500;
    color: #fff;
  }

  .modules .icon {
    width: 12px;
    height: 12px;
  }

  .modules .on {
    background: #343d46;
  }

  .section {
    height: 11px;
    flex: none;
    display: flex;
    align-items: center;
    gap: 3px;
    padding-left: 2px;
    border-radius: 2px;
    background: #ffd200;
    color: #222;
    font-weight: 700;
  }

  .fold {
    width: 7px;
    height: 1px;
    background: #3a78c8;
  }

  .grey {
    width: 100%;
    background: #d2d2d2;
    margin-bottom: 2px;
  }

  .pair {
    display: grid;
    grid-template-columns: 1fr 1fr;
    gap: 2px;
    height: 10px;
    flex: none;
  }

  .parts {
    display: grid;
    grid-template-columns: repeat(3, 1fr);
    grid-auto-rows: 15px;
    flex: none;
  }

  .parts .btn,
  .part {
    box-sizing: border-box;
  }

  .part {
    display: flex;
    align-items: center;
    padding-left: 2px;
    background: #c6ffc6;
    border-bottom: 1px solid #8fae93;
    color: #2c3a2e;
    font: 6px/8px Roboto, sans-serif;
    white-space: nowrap;
  }

  .parts .shown {
    background: #c8c4fa;
    border-color: #c8c4fa;
    color: #444a5a;
  }

  .sub {
    padding-left: 4px;
    padding-top: 2px;
    display: flex;
    flex-direction: column;
    gap: 2px;
  }

  .status {
    display: flex;
    height: 9px;
    flex: none;
  }

  .status span {
    width: 44px;
    flex: none;
    white-space: nowrap;
  }

  .status output {
    flex: 1;
    background: #ff9a1e;
    color: #3f2a08;
    text-align: center;
  }

  .run {
    display: grid;
    grid-template-columns: repeat(4, 1fr);
    gap: 2px;
    height: 11px;
    flex: none;
  }

  /* Render view */
  .workspace {
    flex: 1;
    min-width: 0;
    display: flex;
    flex-direction: column;
  }

  .layouts {
    height: 11px;
    flex: none;
    display: flex;
    padding-top: 1px;
    box-sizing: border-box;
  }

  .layouts button {
    width: 45px;
    display: flex;
    align-items: center;
    justify-content: space-between;
    padding: 0 3px 0 1px;
    background: #353e46;
    border-right: 1px solid #4a545e;
    color: #c6ccd1;
  }

  .layouts .active {
    background: #4a545e;
    color: #fff;
  }

  .layouts i {
    width: 4px;
    height: 4px;
    background: #2b333b;
  }

  .layouts .icon {
    width: 5px;
    height: 5px;
  }

  .layouts .add {
    width: 12px;
    padding: 0 4px;
  }

  .viewbar {
    height: 14px;
    flex: none;
    display: flex;
    align-items: center;
  }

  .viewbar .tool {
    width: 11px;
    height: 11px;
  }

  .viewbar .icon {
    width: 8px;
    height: 8px;
  }

  .viewbar a {
    margin-left: auto;
    margin-right: 4px;
    color: #fff;
    font-weight: 700;
  }

  .viewbar .frame .icon {
    width: 7px;
    height: 7px;
  }

  .view {
    flex: 1;
    min-height: 0;
    background: #1a232d;
    border-top: 2px solid #2a2a9c;
    border-left: 2px solid #2a2a9c;
    margin-left: -1px;
  }

  .view svg {
    display: block;
    width: 100%;
  }

  .legend {
    font: 700 10px/10px Lato, sans-serif;
    text-anchor: middle;
    fill: #fff;
  }

  .small {
    font-size: 9px;
  }

  .title {
    font-size: 14px;
  }

  .tick {
    stroke: #aeb4ba;
    stroke-width: 1;
    fill: none;
  }

  .line {
    fill: none;
    stroke-width: 1;
  }

  .teal {
    stroke: #056860;
    opacity: .4;
  }

  .mist {
    stroke: #d8e0d0;
    opacity: .4;
  }

  .rust {
    stroke: #4a3810;
    opacity: .35;
  }
</style>
